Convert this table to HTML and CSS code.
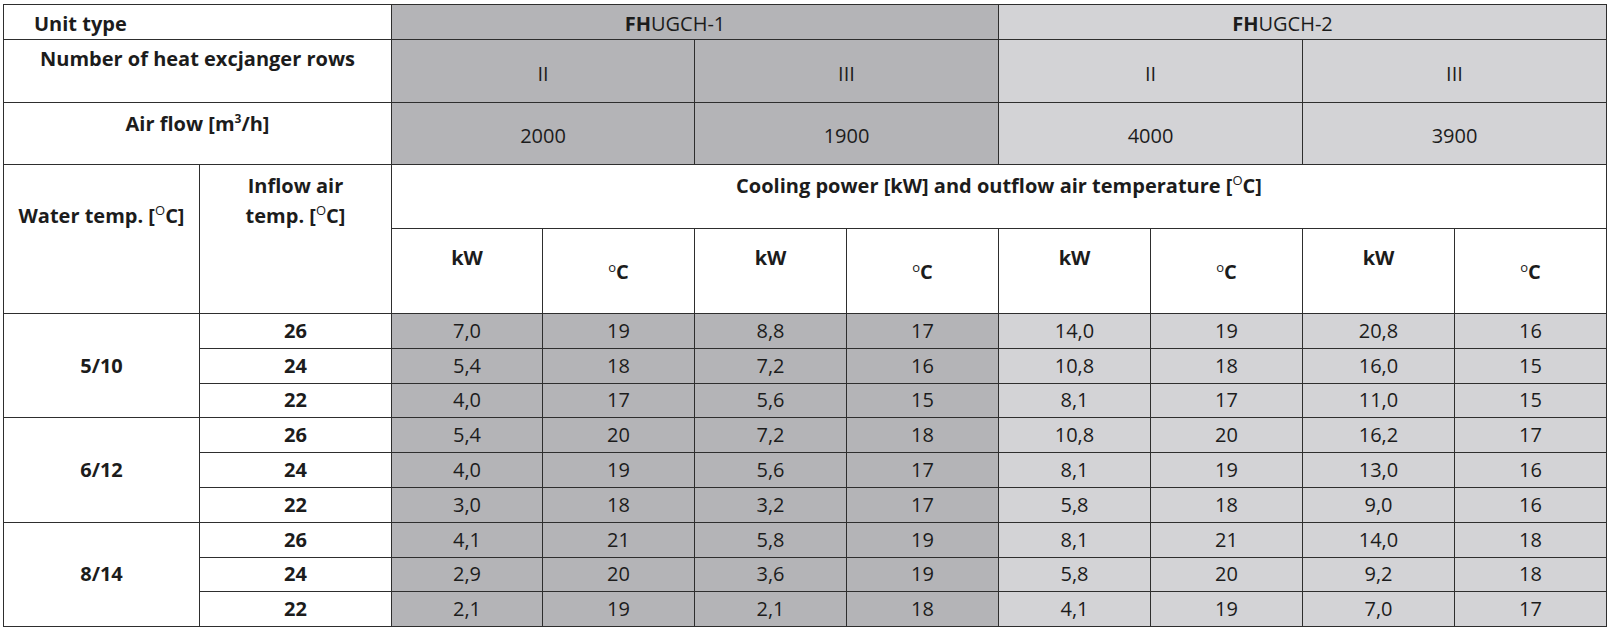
FILE: index.html
```html
<!DOCTYPE html>
<html lang="en">
<head>
<meta charset="utf-8">
<title>FHUGCH cooling data</title>
<link rel="stylesheet" href="styles.css">
</head>
<body>
<table class="spec">
  <colgroup>
    <col class="c-a"><col class="c-b">
    <col class="c-d1"><col class="c-d"><col class="c-d"><col class="c-d">
    <col class="c-d"><col class="c-d"><col class="c-d"><col class="c-d">
  </colgroup>
  <tr class="r-unit">
    <th colspan="2" class="lbl-left">Unit type</th>
    <td colspan="4" class="g1 model"><b>FH</b>UGCH-1</td>
    <td colspan="4" class="g2 model"><b>FH</b>UGCH-2</td>
  </tr>
  <tr class="r-rows">
    <th colspan="2" class="lbl-rows">Number of heat excjanger rows</th>
    <td colspan="2" class="g1 val-rows">II</td>
    <td colspan="2" class="g1 val-rows">III</td>
    <td colspan="2" class="g2 val-rows">II</td>
    <td colspan="2" class="g2 val-rows">III</td>
  </tr>
  <tr class="r-air">
    <th colspan="2" class="lbl-air">Air flow [m<sup class="cube">3</sup>/h]</th>
    <td colspan="2" class="g1 val-air">2000</td>
    <td colspan="2" class="g1 val-air">1900</td>
    <td colspan="2" class="g2 val-air">4000</td>
    <td colspan="2" class="g2 val-air">3900</td>
  </tr>
  <tr class="r-cool">
    <th rowspan="2" class="lbl-water">Water temp. [<sup class="deg">O</sup>C]</th>
    <th rowspan="2" class="lbl-inflow">Inflow air<br>temp. [<sup class="deg">O</sup>C]</th>
    <th colspan="8" class="lbl-cool">Cooling power [kW] and outflow air temperature [<sup class="deg">O</sup>C]</th>
  </tr>
  <tr class="r-units">
    <th class="unit-kw">kW</th><th class="unit-c"><sup class="deg-s">o</sup>C</th>
    <th class="unit-kw">kW</th><th class="unit-c"><sup class="deg-s">o</sup>C</th>
    <th class="unit-kw">kW</th><th class="unit-c"><sup class="deg-s">o</sup>C</th>
    <th class="unit-kw">kW</th><th class="unit-c"><sup class="deg-s">o</sup>C</th>
  </tr>

  <tr class="r-data">
    <th rowspan="3" class="grp">5/10</th><th class="inflow">26</th>
    <td class="g1">7,0</td><td class="g1">19</td><td class="g1">8,8</td><td class="g1">17</td>
    <td class="g2">14,0</td><td class="g2">19</td><td class="g2">20,8</td><td class="g2">16</td>
  </tr>
  <tr class="r-data">
    <th class="inflow">24</th>
    <td class="g1">5,4</td><td class="g1">18</td><td class="g1">7,2</td><td class="g1">16</td>
    <td class="g2">10,8</td><td class="g2">18</td><td class="g2">16,0</td><td class="g2">15</td>
  </tr>
  <tr class="r-data">
    <th class="inflow">22</th>
    <td class="g1">4,0</td><td class="g1">17</td><td class="g1">5,6</td><td class="g1">15</td>
    <td class="g2">8,1</td><td class="g2">17</td><td class="g2">11,0</td><td class="g2">15</td>
  </tr>

  <tr class="r-data">
    <th rowspan="3" class="grp">6/12</th><th class="inflow">26</th>
    <td class="g1">5,4</td><td class="g1">20</td><td class="g1">7,2</td><td class="g1">18</td>
    <td class="g2">10,8</td><td class="g2">20</td><td class="g2">16,2</td><td class="g2">17</td>
  </tr>
  <tr class="r-data">
    <th class="inflow">24</th>
    <td class="g1">4,0</td><td class="g1">19</td><td class="g1">5,6</td><td class="g1">17</td>
    <td class="g2">8,1</td><td class="g2">19</td><td class="g2">13,0</td><td class="g2">16</td>
  </tr>
  <tr class="r-data">
    <th class="inflow">22</th>
    <td class="g1">3,0</td><td class="g1">18</td><td class="g1">3,2</td><td class="g1">17</td>
    <td class="g2">5,8</td><td class="g2">18</td><td class="g2">9,0</td><td class="g2">16</td>
  </tr>

  <tr class="r-data">
    <th rowspan="3" class="grp">8/14</th><th class="inflow">26</th>
    <td class="g1">4,1</td><td class="g1">21</td><td class="g1">5,8</td><td class="g1">19</td>
    <td class="g2">8,1</td><td class="g2">21</td><td class="g2">14,0</td><td class="g2">18</td>
  </tr>
  <tr class="r-data">
    <th class="inflow">24</th>
    <td class="g1">2,9</td><td class="g1">20</td><td class="g1">3,6</td><td class="g1">19</td>
    <td class="g2">5,8</td><td class="g2">20</td><td class="g2">9,2</td><td class="g2">18</td>
  </tr>
  <tr class="r-data">
    <th class="inflow">22</th>
    <td class="g1">2,1</td><td class="g1">19</td><td class="g1">2,1</td><td class="g1">18</td>
    <td class="g2">4,1</td><td class="g2">19</td><td class="g2">7,0</td><td class="g2">17</td>
  </tr>
</table>
</body>
</html>
```

FILE: styles.css
```css
html, body {
  margin: 0;
  padding: 0;
  background: #ffffff;
}

body {
  font-family: "Open Sans", "Lato", "Liberation Sans", sans-serif;
  color: #1c1c1c;
  font-size: 20px;
}

.spec {
  border-collapse: collapse;
  table-layout: fixed;
  width: 1604px;
  margin: 4px 0 0 3px;
}

.c-a { width: 196px; }
.c-b { width: 192px; }
.c-d1 { width: 151px; }
.c-d { width: 152px; }

th,
td {
  border: 1px solid #2e2e2e;
  padding: 0;
  text-align: center;
  font-weight: normal;
  line-height: 26px;
  vertical-align: middle;
}

th {
  font-weight: 700;
}

.g1 { background: #b4b4b7; }
.g2 { background: #d3d3d6; }

.r-unit { height: 35px; }
.r-rows { height: 63px; }
.r-air { height: 62px; }
.r-cool { height: 64px; }
.r-units { height: 85px; }
.r-data { height: 34.8px; }

.lbl-left {
  text-align: left;
  padding-left: 30px;
  padding-top: 3px;
}

.model {
  padding-right: 40px;
  padding-top: 3px;
}

.model b {
  font-weight: 700;
}

.lbl-rows {
  vertical-align: top;
  padding-top: 6px;
}

.lbl-air {
  vertical-align: top;
  padding-top: 8px;
}

.val-rows {
  padding-top: 6px;
}

.val-air {
  padding-top: 4px;
}

.lbl-water {
  vertical-align: top;
  padding-top: 38px;
}

.lbl-inflow {
  vertical-align: top;
  padding-top: 6px;
  line-height: 30px;
}

.lbl-cool {
  vertical-align: top;
  padding-top: 8px;
}

.unit-kw {
  vertical-align: top;
  padding-top: 16px;
}

.unit-c {
  vertical-align: top;
  padding-top: 30px;
}

.cube {
  font-size: 12px;
  vertical-align: 8px;
  line-height: 0;
}

.deg {
  font-size: 13px;
  vertical-align: 8px;
  line-height: 0;
  font-weight: normal;
}

.deg-s {
  font-size: 13px;
  vertical-align: 7px;
  line-height: 0;
  font-weight: normal;
}
```
